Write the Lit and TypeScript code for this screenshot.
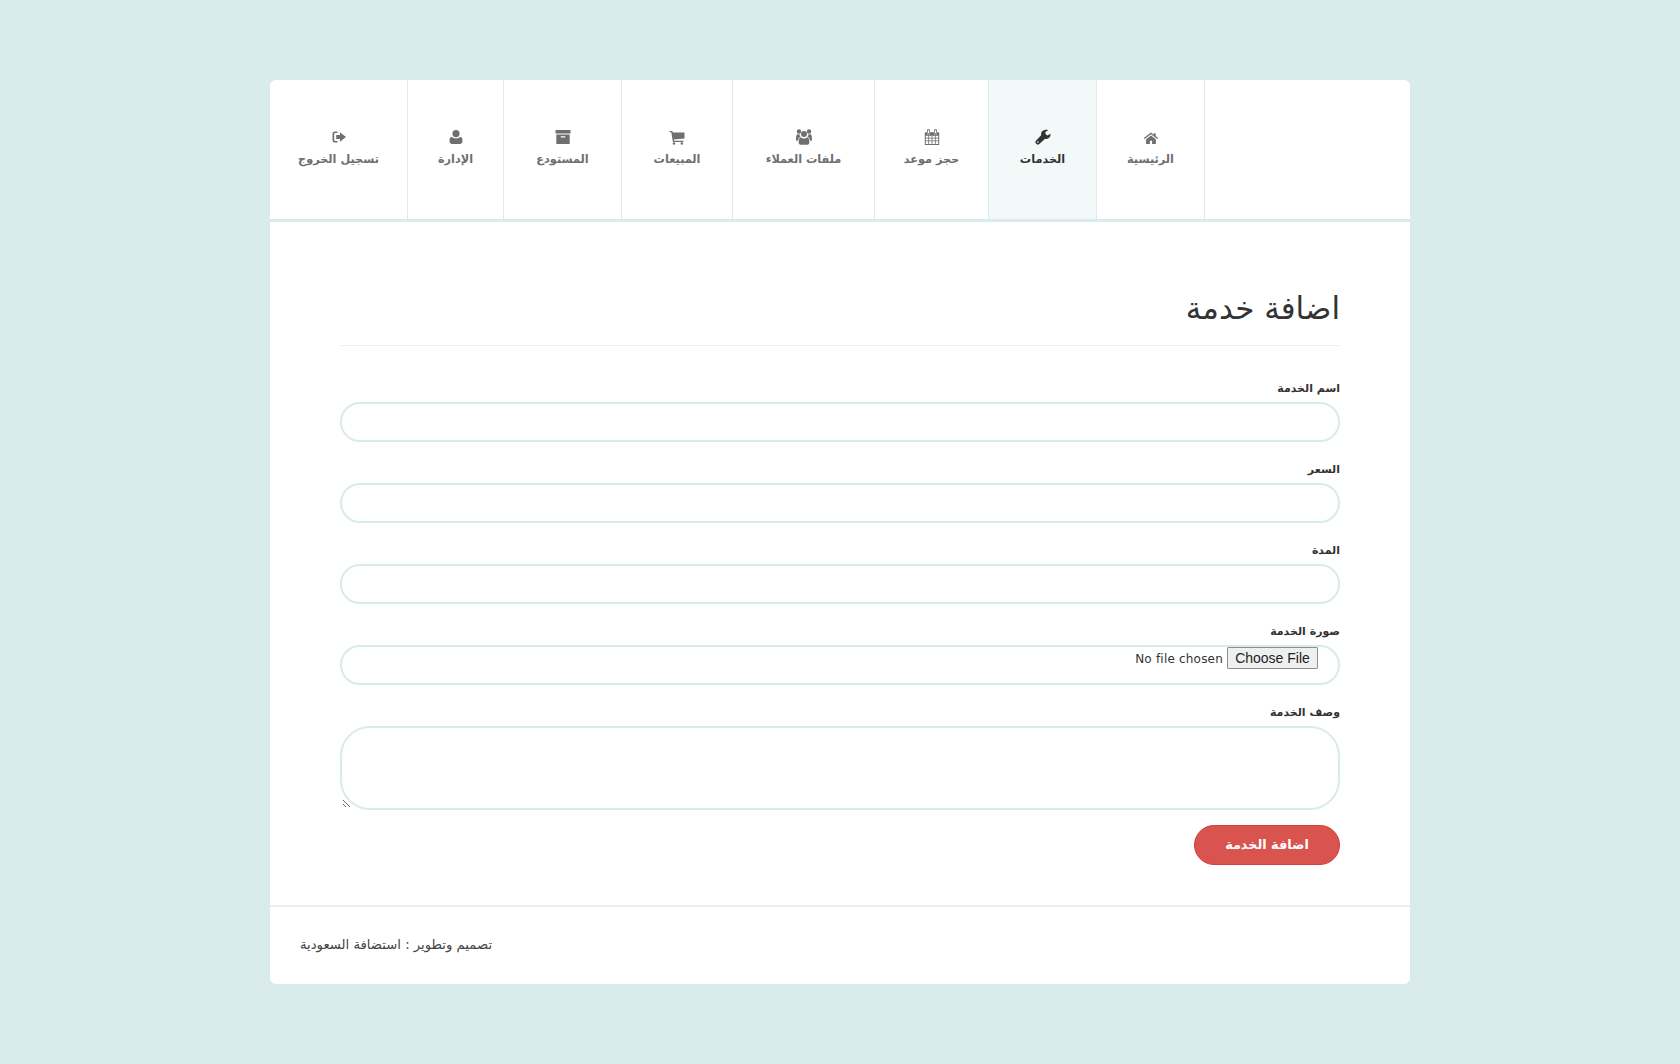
import { LitElement, html, css, svg } from "lit";
import { customElement } from "lit/decorators.js";

const icons: Record<string, any> = {
  signout: svg`<path d="M6.500 2.500H4A2.500 2.500 0 0 0 1.500 5v6A2.500 2.500 0 0 0 4 13.500h2.500v-1.500H4.200a1 1 0 0 1-1-1V5a1 1 0 0 1 1-1h2.300z"/><path d="M9 3.200 15 8l-6 4.800V10H5.200V6H9z"/>`,
  user: svg`<circle cx="8" cy="4.600" r="3.600"/><path d="M3.600 7.800C4.800 8.900 6.300 9.500 8 9.500s3.200-.6 4.400-1.700c1.500.3 2.100 2 2.100 4 0 2-1 3.200-2.600 3.200H4.100c-1.600 0-2.600-1.200-2.600-3.200 0-2 .6-3.700 2.100-4z"/>`,
  archive: svg`<path d="M.5 1h15v3.600H.5z"/><path fill-rule="evenodd" d="M1.300 5.400h13.400V15H1.300zM5.800 7.300v1.300h4.400V7.300z"/>`,
  cart: svg`<path d="M.5 2h2.800l.6 1.600h11.600v6l-10.700 1 .3 1.200h9.400v1.300H3.900L2.300 3.300H.5z"/><circle cx="5" cy="14.500" r="1.200"/><circle cx="12.800" cy="14.500" r="1.200"/>`,
  users: svg`<circle cx="8" cy="5.100" r="3"/><circle cx="3" cy="2.500" r="2.200"/><circle cx="13" cy="2.500" r="2.200"/><path d="M4.600 8.300c.9.800 2.100 1.300 3.400 1.300s2.500-.5 3.400-1.300c1.300.3 1.900 2 1.900 4.100v1.400c0 1.300-1 2-2 2H4.700c-1 0-2-.7-2-2v-1.400c0-2.100.6-3.800 1.900-4.100z"/><path d="M1.500 5.200h2.100c-.1 1.200.3 2 1 2.600C3 8.300 2 10 1.900 11.800H1c-.6 0-1-.5-1-1.300 0-2.400.4-5.300 1.500-5.300zM12.400 5.200h2.100c1.100 0 1.500 2.900 1.500 5.300 0 .8-.4 1.300-1 1.300h-.9c-.1-1.800-1.100-3.500-2.700-4 .7-.6 1.100-1.400 1-2.600z"/>`,
  calendar: svg`<path fill-rule="evenodd" d="M.8 3.200h14.400V16H.8zM1.800 6.700v2h2.500v-2zm3.300 0v2h2.500v-2zm3.300 0v2h2.500v-2zm3.300 0v2h2.500v-2zM1.800 9.500v2h2.500v-2zm3.300 0v2h2.500v-2zm3.300 0v2h2.500v-2zm3.300 0v2h2.500v-2zM1.800 12.300V15h2.500v-2.700zm3.300 0V15h2.500v-2.700zm3.300 0V15h2.500v-2.700zm3.300 0V15h2.500v-2.700z"/><path fill="#fff" d="M3 .6h3v4.700H3zM10 .6h3v4.700h-3z"/><path fill-rule="evenodd" d="M3.200.3h2.600v4.500H3.200zM4 1.200v2.700h1V1.200zM10.200.3h2.600v4.500h-2.600zM11 1.200v2.700h1V1.200z"/>`,
  wrench: svg`<path d="M11.400.8c.6 0 1.200.1 1.700.4L10.300 3l.3 2.300 2 1.200 2.700-1.800c.1.300.2.700.2 1.100 0 2.300-1.900 4.100-4.200 4.100-.4 0-.8-.1-1.200-.2L4.300 15a1.900 1.900 0 0 1-2.700 0L1 14.400a1.900 1.900 0 0 1 0-2.700l5.300-5.700a4.400 4.400 0 0 1-.2-1.200C6.100 2.600 8.500.8 11.400.8z"/><circle cx="2.900" cy="13.100" r=".8" fill="#f3f9f9"/>`,
  home: svg`<g transform="translate(.6 2.200) scale(.92 .86)"><path d="M8 5 2.700 9.400v4.900a.6.600 0 0 0 .6.600h3.500v-3.900h2.400v3.900h3.500a.6.600 0 0 0 .6-.6V9.400z"/><path d="M8 1.500 11.100 4V2.300h2v3.400l2.700 2.300-.9 1L8 3.500 1.100 9l-.9-1z"/></g>`,
};

const tabs = [
  { label: "تسجيل الخروج", icon: "signout" },
  { label: "الإدارة", icon: "user" },
  { label: "المستودع", icon: "archive" },
  { label: "المبيعات", icon: "cart" },
  { label: "ملفات العملاء", icon: "users" },
  { label: "حجز موعد", icon: "calendar" },
  { label: "الخدمات", icon: "wrench", active: true },
  { label: "الرئيسية", icon: "home" },
];

@customElement("app-root")
export class AppRoot extends LitElement {
  static styles = css`
    :host {
      display: block;
      min-height: 1064px;
      background: #d9ebea;
      padding: 80px 0;
      box-sizing: border-box;
      font-family: "DejaVu Sans", "Noto Sans", sans-serif;
      color: #333;
    }
    .card {
      width: 1140px;
      height: 904px;
      margin: 0 auto;
      background: #fff;
      border-radius: 6px;
      display: flex;
      flex-direction: column;
      overflow: hidden;
    }
    .nav {
      display: grid;
      grid-template-columns: 138px 96px 118px 111px 142px 114px 108px 108px 1fr;
      height: 142px;
      box-sizing: border-box;
      border-bottom: 3px solid #d9ebea;
      flex: none;
    }
    .tab {
      display: flex;
      flex-direction: column;
      align-items: center;
      padding-top: 49px;
      border-right: 1px solid #d9ebea;
      color: #6f6f6f;
      font-size: 11.3px;
      font-weight: 700;
      box-sizing: border-box;
    }
    .tab.active {
      background: #f3f9f9;
      color: #333;
    }
    .tab svg {
      width: 16px;
      height: 16px;
      fill: currentColor;
      display: block;
    }
    .tab span {
      margin-top: 6px;
      line-height: 18px;
      white-space: nowrap;
    }
    .main {
      flex: 1;
      padding: 69px 70px 0;
      direction: rtl;
      box-sizing: border-box;
    }
    h1 {
      margin: 0 0 30px;
      padding: 0 0 19px;
      font-size: 31px;
      font-weight: 400;
      line-height: 35px;
      color: #333;
      border-bottom: 1px solid #e9eff0;
    }
    .field {
      display: flex;
      flex-direction: column;
      margin-bottom: 15px;
    }
    label {
      font-size: 11px;
      font-weight: 700;
      line-height: 25px;
      height: 26px;
      color: #333;
    }
    .control {
      height: 40px;
      box-sizing: border-box;
      border: 2px solid #d9ebea;
      border-radius: 20px;
      background: #fff;
      padding: 0 20px;
      font: inherit;
      outline: none;
      width: 100%;
      display: block;
    }
    input[type="file"] {
      font-family: "DejaVu Sans", sans-serif;
      font-size: 12px;
      letter-spacing: 0.2px;
      color: #333;
    }
    input[type="file"]::file-selector-button {
      font-family: "Liberation Sans", sans-serif;
      font-size: 14px;
      letter-spacing: 0;
      height: 22px;
      width: 91px;
      padding: 0;
      margin: 0 0 0 4px;
      background: #efefef;
      border: 1px solid #8f8f8f;
      border-radius: 1px;
      color: #222;
    }
    textarea.control {
      height: 84px;
      border-radius: 30px;
      resize: vertical;
    }
    .actions {
      display: flex;
      justify-content: flex-start;
    }
    button.submit {
      width: 146px;
      height: 40px;
      border: 1px solid #d43f3a;
      border-radius: 20px;
      background: #d9534f;
      color: #fff;
      font-family: inherit;
      font-size: 12.800px;
      font-weight: 700;
      padding: 0 0 2px;
    }
    footer {
      flex: none;
      height: 79px;
      box-sizing: border-box;
      border-top: 2px solid #e6f0f0;
      padding: 0 30px 3px;
      display: flex;
      align-items: center;
      justify-content: flex-start;
      font-size: 13.200px;
      color: #444;
    }
  `;

  render() {
    return html`
      <div class="card">
        <nav class="nav">
          ${tabs.map(
            (t) => html`
              <div class="tab ${t.active ? "active" : ""}">
                <svg viewBox="0 0 16 16" aria-hidden="true">${icons[t.icon]}</svg>
                <span dir="rtl">${t.label}</span>
              </div>
            `
          )}
          <div></div>
        </nav>
        <main class="main">
          <h1>اضافة خدمة</h1>
          <div class="field"><label>اسم الخدمة</label><input class="control" type="text" /></div>
          <div class="field"><label>السعر</label><input class="control" type="text" /></div>
          <div class="field"><label>المدة</label><input class="control" type="text" /></div>
          <div class="field"><label>صورة الخدمة</label><input class="control" type="file" /></div>
          <div class="field"><label>وصف الخدمة</label><textarea class="control"></textarea></div>
          <div class="actions"><button class="submit">اضافة الخدمة</button></div>
        </main>
        <footer><span dir="rtl">تصميم وتطوير : استضافة السعودية</span></footer>
      </div>
    `;
  }
}
